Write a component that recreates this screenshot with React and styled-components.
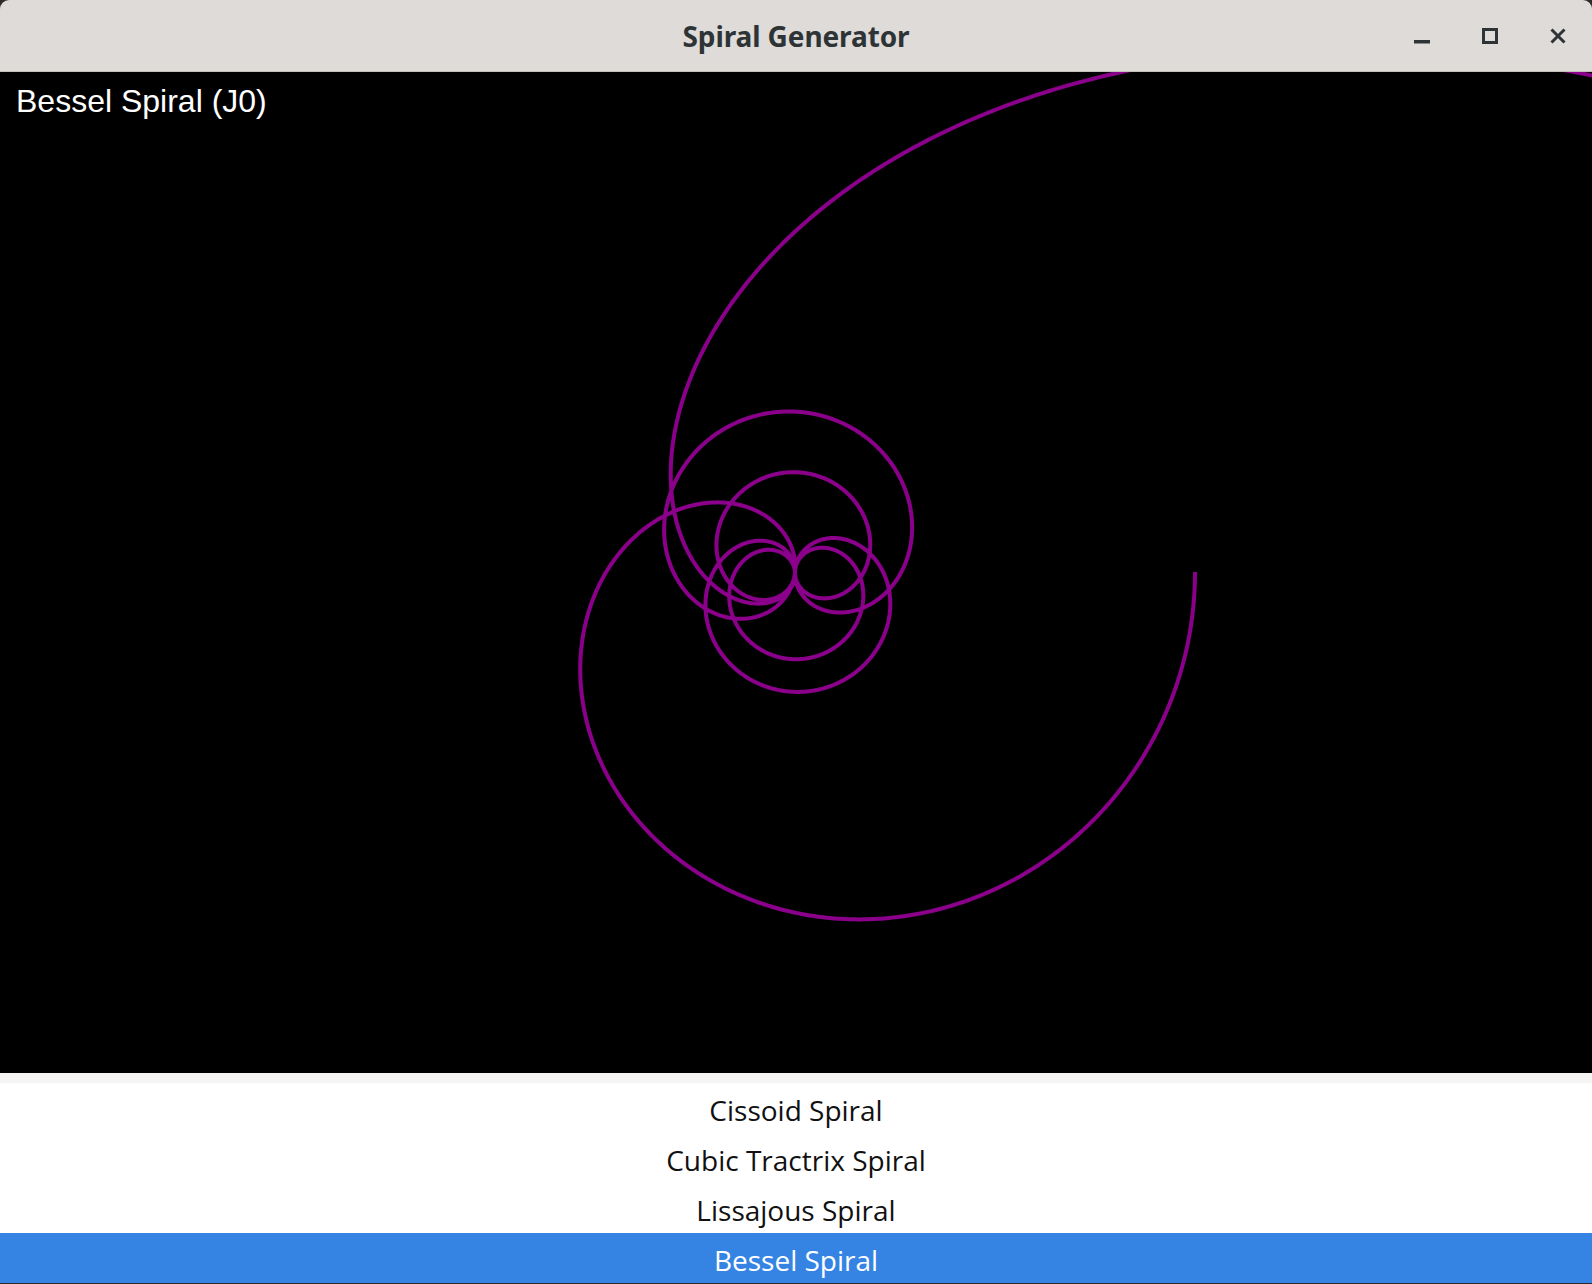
import React, { useMemo } from 'react';
import styled, { createGlobalStyle } from 'styled-components';

const GlobalStyle = createGlobalStyle`
  html, body {
    margin: 0;
    padding: 0;
    background: #2b2b2b;
  }
  body {
    font-family: "Open Sans", "Noto Sans", sans-serif;
  }
`;

const Window = styled.div`
  width: 1592px;
  height: 1284px;
  display: flex;
  flex-direction: column;
  overflow: hidden;
  background: #2b2b2b;
`;

const TitleBar = styled.header`
  flex: none;
  height: 71px;
  display: grid;
  grid-template-columns: 1fr auto 1fr;
  align-items: center;
  background: #dedbd8;
  border-bottom: 1px solid #c3beb8;
  border-radius: 9px 9px 0 0;
`;

const Title = styled.h1`
  grid-column: 2;
  margin: 0;
  font-family: "Noto Sans", "Open Sans", sans-serif;
  font-size: 28px;
  font-weight: 700;
  color: #2e3436;
  letter-spacing: -0.1px;
`;

const Controls = styled.div`
  grid-column: 3;
  justify-self: end;
  display: flex;
  align-items: center;
`;

const WinButton = styled.button`
  width: 68px;
  height: 40px;
  padding: 0;
  border: 0;
  background: none;
  display: flex;
  align-items: center;
  justify-content: center;
  color: #2e3436;
`;

const Canvas = styled.main`
  flex: none;
  position: relative;
  height: 1001px;
  background: #000;
  overflow: hidden;
`;

const Plot = styled.svg`
  display: block;
`;

const Caption = styled.div`
  position: absolute;
  left: 16px;
  top: 11px;
  font-family: "Liberation Sans", Arial, sans-serif;
  font-size: 32px;
  color: #fff;
  line-height: 1.15;
`;

const List = styled.ul`
  flex: none;
  margin: 0;
  padding: 10px 0 0;
  list-style: none;
  background: #f6f5f4;
`;

const Row = styled.li`
  height: 50px;
  box-sizing: border-box;
  padding-top: 3px;
  display: flex;
  align-items: center;
  justify-content: center;
  font-size: 28px;
  color: ${(p) => (p.$selected ? '#fff' : '#111')};
  background: ${(p) => (p.$selected ? '#3584e4' : '#fff')};
`;

const W = 1592;
const H = 1001;

const factorial = (n) => {
  let f = 1;
  for (let i = 2; i <= n; i++) f *= i;
  return f;
};

// truncated power series, 20 terms
function besselJ0(x) {
  let sum = 0;
  for (let k = 0; k < 20; k++) {
    const sign = k % 2 ? -1 : 1;
    sum += (sign * Math.pow(x / 2, 2 * k)) / Math.pow(factorial(k), 2);
  }
  return sum;
}

function spiralPath(cx, cy, scale) {
  const pts = [];
  for (let t = 0; t <= 20; t += 0.004) {
    const r = scale * besselJ0(t);
    if (Math.abs(r) > 4000) break;
    const x = cx + r * Math.cos(2 * t);
    const y = cy + r * Math.sin(2 * t);
    pts.push(`${x.toFixed(2)},${y.toFixed(2)}`);
  }
  return 'M' + pts.join('L');
}

const items = ['Cissoid Spiral', 'Cubic Tractrix Spiral', 'Lissajous Spiral', 'Bessel Spiral'];

export default function App() {
  const d = useMemo(() => spiralPath(795, 500, 400), []);

  return (
    <Window>
      <GlobalStyle />
      <TitleBar>
        <Title>Spiral Generator</Title>
        <Controls>
          <WinButton aria-label="minimize">
            <svg width="20" height="20" viewBox="0 0 20 20">
              <rect x="2" y="14" width="16" height="3.5" fill="currentColor" />
            </svg>
          </WinButton>
          <WinButton aria-label="maximize">
            <svg width="20" height="20" viewBox="0 0 20 20">
              <rect x="3.5" y="3.5" width="13" height="13" fill="none" stroke="currentColor" strokeWidth="3" />
            </svg>
          </WinButton>
          <WinButton aria-label="close">
            <svg width="20" height="20" viewBox="0 0 20 20">
              <path d="M3.5 3.5L16.5 16.5M16.5 3.5L3.5 16.5" stroke="currentColor" strokeWidth="3" />
            </svg>
          </WinButton>
        </Controls>
      </TitleBar>
      <Canvas>
        <Plot width={W} height={H} viewBox={`0 0 ${W} ${H}`}>
          <path d={d} fill="none" stroke="#8b008b" strokeWidth="4" strokeLinejoin="round" />
        </Plot>
        <Caption>Bessel Spiral (J0)</Caption>
      </Canvas>
      <List>
        {items.map((name) => (
          <Row key={name} $selected={name === 'Bessel Spiral'}>
            {name}
          </Row>
        ))}
      </List>
    </Window>
  );
}
